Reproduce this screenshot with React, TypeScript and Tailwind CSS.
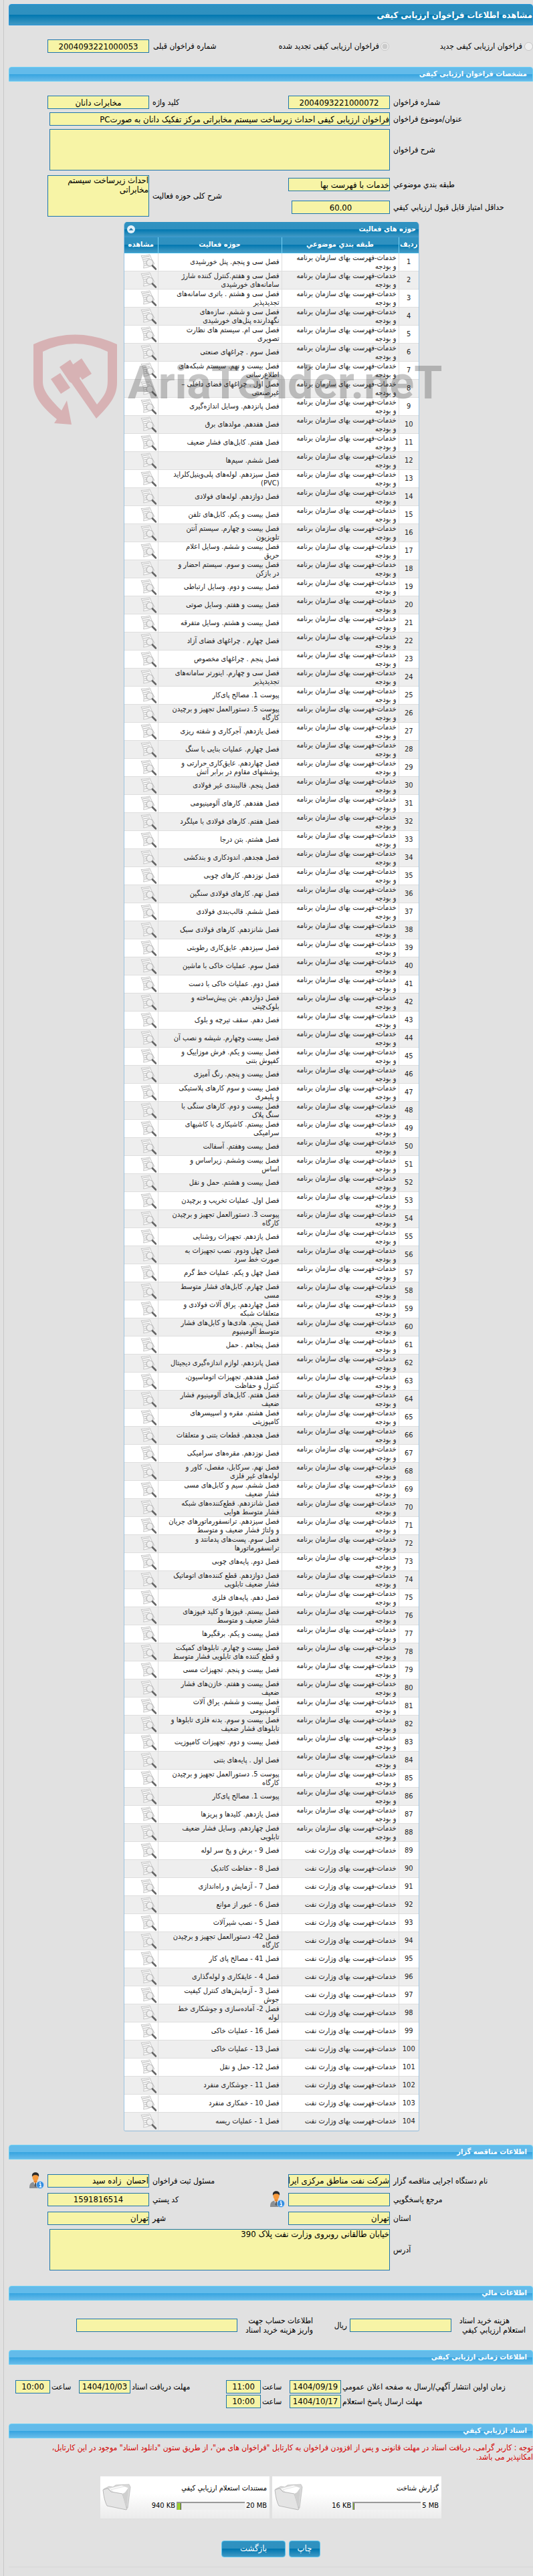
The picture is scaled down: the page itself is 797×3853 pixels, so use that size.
import React, { useState } from 'react';

const BUDGET = 'خدمات-فهرست بهای سازمان برنامه\nو بودجه';
const OIL = 'خدمات-فهرست بهای وزارت نفت';

// the first 88 rows belong to the planning organisation, the rest to the oil ministry
const budgetRows = [
    'فصل سی و پنجم. پنل خورشیدی',
    'فصل سی و هفتم.کنترل کننده شارژ\nسامانه‌های خورشیدی',
    'فصل سی و هشتم . باتری سامانه‌های\nتجدیدپذیر',
    'فصل سی و ششم. سازه‌های\nنگهدارنده پنل‌های خورشیدی',
    'فصل سی ام. سیستم های نظارت\nتصویری',
    'فصل سوم . چراغهای صنعتی',
    'فصل بیست و نهم. سیستم شبکه‌های\nاطلاع‌رسانی',
    'فصل اول . چراغهای فضای داخلی –\nغیرصنعتی',
    'فصل پانزدهم. وسایل اندازه‌گیری',
    'فصل هفدهم. مولدهای برق',
    'فصل هفتم. کابل‌های فشار ضعیف',
    'فصل ششم. سیم‌ها',
    'فصل سیزدهم. لوله‌های پلی‌وینیل‌کلراید\n(PVC)',
    'فصل دوازدهم. لوله‌های فولادی',
    'فصل بیست و یکم. کابل‌های تلفن',
    'فصل بیست و چهارم. سیستم آنتن\nتلویزیون',
    'فصل بیست و ششم. وسایل اعلام\nحریق',
    'فصل بیست و سوم. سیستم احضار و\nدر بازکن',
    'فصل بیست و دوم. وسایل ارتباطی',
    'فصل بیست و هفتم. وسایل صوتی',
    'فصل بیست و هشتم. وسایل متفرقه',
    'فصل چهارم . چراغهای فضای آزاد',
    'فصل پنجم . چراغهای مخصوص',
    'فصل سی و چهارم. اینورتر سامانه‌های\nتجدیدپذیر',
    'پیوست 1. مصالح پای‌کار',
    'پیوست 5. دستورالعمل تجهیز و برچیدن\nکارگاه',
    'فصل یازدهم. آجرکاری و شفته ریزی',
    'فصل چهارم. عملیات بنایی با سنگ',
    'فصل چهاردهم. عایق‌کاری حرارتی و\nپوششهای مقاوم در برابر آتش',
    'فصل پنجم. قالببندی غیر فولادی',
    'فصل هفدهم. کارهای آلومینیومی',
    'فصل هفتم. کارهای فولادی با میلگرد',
    'فصل هشتم. بتن درجا',
    'فصل هجدهم. اندودکاری و بندکشی',
    'فصل نوزدهم. کارهای چوبی',
    'فصل نهم. کارهای فولادی سنگین',
    'فصل ششم. قالب‌بندی فولادی',
    'فصل شانزدهم. کارهای فولادی سبک',
    'فصل سیزدهم. عایق‌کاری رطوبتی',
    'فصل سوم. عملیات خاکی با ماشین',
    'فصل دوم. عملیات خاکی با دست',
    'فصل دوازدهم. بتن پیش‌ساخته و\nبلوک‌چینی',
    'فصل دهم. سقف تیرچه و بلوک',
    'فصل بیست وچهارم. شیشه و نصب آن',
    'فصل بیست و یکم. فرش موزاییک و\nکفپوش بتنی',
    'فصل بیست و پنجم. رنگ آمیزی',
    'فصل بیست و سوم کارهای پلاستیکی\nو پلیمری',
    'فصل بیست و دوم. کارهای سنگی با\nسنگ پلاک',
    'فصل بیستم. کاشیکاری با کاشیهای\nسرامیکی',
    'فصل بیست وهفتم. آسفالت',
    'فصل بیست وششم. زیراساس و\nاساس',
    'فصل بیست و هشتم. حمل و نقل',
    'فصل اول. عملیات تخریب و برچیدن',
    'پیوست 3. دستورالعمل تجهیز و برچیدن\nکارگاه',
    'فصل یازدهم. تجهیزات روشنایی',
    'فصل چهل ودوم. نصب تجهیزات به\nصورت خط سرد',
    'فصل چهل و یکم. عملیات خط گرم',
    'فصل چهارم. کابل‌های فشار متوسط\nمسی',
    'فصل چهاردهم. یراق آلات فولادی و\nمتعلقات شبکه',
    'فصل پنجم. هادی‌ها و کابل‌های فشار\nمتوسط آلومینیوم',
    'فصل پنجاهم . حمل',
    'فصل پانزدهم. لوازم اندازه‌گیری دیجیتال',
    'فصل هفدهم. تجهیزات اتوماسیون،\nکنترل و حفاظت',
    'فصل هفتم. کابل‌های آلومینیوم فشار\nضعیف',
    'فصل هشتم. مقره و اسپیسرهای\nکامپوزیتی',
    'فصل هجدهم. قطعات بتنی و متعلقات',
    'فصل نوزدهم. مقره‌های سرامیکی',
    'فصل نهم. سرکابل، مفصل، کاور و\nلوله‌های غیر فلزی',
    'فصل ششم. سیم و کابل‌های مسی\nفشار ضعیف',
    'فصل شانزدهم. قطع‌کننده‌های شبکه\nفشار متوسط هوایی',
    'فصل سیزدهم. ترانسفورماتورهای جریان\nو ولتاژ فشار ضعیف و متوسط',
    'فصل سوم. پست‌های پدمانتد و\nترانسفورماتورها',
    'فصل دوم. پایه‌های چوبی',
    'فصل دوازدهم. قطع کننده‌های اتوماتیک\nفشار ضعیف تابلویی',
    'فصل دهم. پایه‌های فلزی',
    'فصل بیستم. فیوزها و کلید فیوزهای\nفشار ضعیف و متوسط',
    'فصل بیست و یکم. برقگیرها',
    'فصل بیست و چهارم. تابلوهای کمپکت\nو قطع کننده های تابلویی فشار متوسط',
    'فصل بیست و پنجم. تجهیزات مسی',
    'فصل بیست و هفتم. خازن‌های فشار\nضعیف',
    'فصل بیست و ششم. یراق آلات\nآلومینیومی',
    'فصل بیست و سوم. بدنه فلزی تابلوها و\nتابلوهای فشار ضعیف',
    'فصل بیست و دوم. تجهیزات کامپوزیت',
    'فصل اول . پایه‌های بتنی',
    'پیوست 5. دستورالعمل تجهیز و برچیدن\nکارگاه',
    'پیوست 1. مصالح پای‌کار',
    'فصل یازدهم. کلیدها و پریزها',
    'فصل چهاردهم. وسایل فشار ضعیف\nتابلویی',
];

const oilRows = [
    'فصل 9 - برش و پخ سر لوله',
    'فصل 8 - حفاظت کاتدیک',
    'فصل 7 - آزمایش و راه‌اندازی',
    'فصل 6 - عبور از موانع',
    'فصل 5 - نصب شیرآلات',
    'فصل 42- دستورالعمل تجهیز و برچیدن\nکارگاه',
    'فصل 41 - مصالح پای کار',
    'فصل 4 - عایقکاری و لوله‌گذاری',
    'فصل 3 - آزمایش‌های کنترل کیفیت\nجوش',
    'فصل 2- آماده‌سازی و جوشکاری خط\nلوله',
    'فصل 16 - عملیات خاکی',
    'فصل 13 - عملیات خاکی',
    'فصل 12- حمل و نقل',
    'فصل 11 - جوشکاری منفرد',
    'فصل 10 - خمکاری منفرد',
    'فصل 1 - عملیات ریسه',
];

const rows = [
    ...budgetRows.map(name => ({ category: BUDGET, name })),
    ...oilRows.map(name => ({ category: OIL, name })),
];

const FIELD = 'block border border-[#1f76ab] bg-[#f7f4a6] text-[13px] text-black outline-none';
const DARK = 'bg-[linear-gradient(#2f92c1_0%,#2f90bf_50%,#0077b0_50%,#4199c4_100%)]';

const ViewIcon: React.FC = () => (
    <svg width="24" height="24" viewBox="0 0 24 24" fill="none">
        <path d="M1 2.5C5 2.5 10 2 14 .8c1.500 4 3.500 9 7 13.700-3.500 3-8.500 5.500-16.500 6.500 1.500-5 0-12-3.500-18.500z" fill="#f8f8f8" stroke="#c2c2c2" strokeWidth=".9" />
        <path d="M3 5l10.500-1.800M4 8l10-1.800M5 11l4-.7M5.500 14l4-.5M5.500 17l4.500-.5" stroke="#bdbdbd" strokeWidth="1" />
        <circle cx="14" cy="13" r="5" fill="#ededed" fillOpacity=".85" stroke="#b5b5b5" strokeWidth="1.100" />
        <path d="M11.500 12.500c.3-1.500 1.500-2.300 3-2.300" stroke="#fff" />
        <path d="M18 17.500l5 5" stroke="#666" strokeWidth="2.600" strokeLinecap="round" />
    </svg>
);

const PersonIcon: React.FC = () => (
    <svg width="23" height="25" viewBox="0 0 23 25">
        <path d="M1 24c0-5 1-8 5-9l3.500-1.500L14 15c4 1 5 4 5 9z" fill="#8b8f94" />
        <path d="M7 14l2.800 7.500L13 14z" fill="#f3f3f3" />
        <path d="M9.300 15.500h1.500l.8 5-1.500 2-1.500-2z" fill="#55585c" />
        <path d="M7.500 10h5v4.500l-2.500 2-2.500-2z" fill="#e8862c" />
        <ellipse cx="10" cy="7.500" rx="4.500" ry="5.500" fill="#f79a3c" />
        <path d="M5 7C4.300 2.500 6.500.3 10 .3s6 2.200 5 6.700C14 4.800 12 4.300 10 4.300S6 4.800 5 7z" fill="#2b2b2b" />
        <circle cx="17" cy="19" r="5.500" fill="#2f8be0" stroke="#bfe0fa" strokeWidth=".7" />
        <path d="M15.800 18h2v4M15.500 22h3.600" stroke="#fff" strokeWidth="1.300" fill="none" />
        <circle cx="17" cy="15.800" r="1" fill="#fff" />
    </svg>
);

const FolderIcon: React.FC = () => (
    <svg width="44" height="40" viewBox="0 0 44 40">
        <path d="M2 8l8-4 6 1 4-3 20-1 2 4-4 31-5 2z" fill="#d9d9d9" stroke="#bdbdbd" strokeWidth=".8" />
        <path d="M9 7l20-5 9 3-2 28z" fill="#fafafa" stroke="#d0d0d0" strokeWidth=".7" />
        <path d="M13 9l20-5 6 2-3 27z" fill="#fff" stroke="#d8d8d8" strokeWidth=".7" />
        <path d="M1 9l7-2 5 5 17 3 7 22-1 2L7 33C3 25 2 17 1 9z" fill="#e4e4e4" stroke="#b2b2b2" strokeWidth=".9" />
        <path d="M30 15l4-2 5-7-3 33z" fill="#cfcfcf" />
    </svg>
);

const SectionBar: React.FC<{ title: string }> = ({ title }) => (
    <h2 className="h-[22px] rounded-t-[4px] border border-[#6cd0f5] bg-[linear-gradient(#63bbea_0%,#63bbea_50%,#35a4e0_50%,#68bbe9_100%)] px-2 text-[11px] font-bold leading-5 text-white">
        {title}
    </h2>
);

const Field: React.FC<{ id: string; value?: string; center?: boolean; className?: string }> = ({ id, value = '', center, className = 'w-[152px]' }) => (
    <input id={id} type="text" readOnly value={value} className={`${FIELD} h-5 shrink-0 ${center ? 'text-center' : 'text-right'} ${className}`} />
);

const Area: React.FC<{ id: string; value?: string; className?: string }> = ({ id, value = '', className = '' }) => (
    <textarea id={id} readOnly value={value} className={`${FIELD} h-[62px] resize-none overflow-hidden leading-[14px] ${className}`} />
);

// right-hand label column
const Label: React.FC<{ htmlFor: string; children: React.ReactNode }> = ({ htmlFor, children }) => (
    <label htmlFor={htmlFor} className="w-[209px] shrink-0 whitespace-nowrap text-left">{children}</label>
);

const SideLabel: React.FC<{ htmlFor: string; children: React.ReactNode }> = ({ htmlFor, children }) => (
    <label htmlFor={htmlFor} className="min-w-0 flex-1 whitespace-nowrap text-left">{children}</label>
);

const ActivityTable: React.FC = () => {
    const [open, setOpen] = useState(true);

    return (
        <section className="mr-[170px] w-[442px] overflow-hidden rounded-t-[5px] rounded-b-[3px] border border-t-0 border-[#9cc4e2] bg-[#e2e2e2] text-[11px]">
            <div className={`flex h-[23px] items-center justify-between border-b border-[#3a9ad2] px-1 text-white ${DARK}`}>
                <h3 className="font-bold">حوزه های فعالیت</h3>
                <button type="button" aria-label="بستن" onClick={() => setOpen(!open)} className="flex size-3 items-center justify-center rounded-full bg-[#e3f1fa]">
                    <svg width="8" height="6" viewBox="0 0 8 6"><path d="M4 1l3.500 3.500h-7z" fill="#2277a8" /></svg>
                </button>
            </div>
            {open && (
                <table className="w-full table-fixed">
                    <thead>
                        <tr className={`h-[23px] border-b border-[#62caf2] text-white ${DARK}`}>
                            <th scope="col" className="w-[30px] border-l border-[#72d0f4] p-0">ردیف</th>
                            <th scope="col" className="w-[175px] border-l border-[#72d0f4] p-0">طبقه بندي موضوعي</th>
                            <th scope="col" className="border-l border-[#72d0f4] p-0">حوزه فعالیت</th>
                            <th scope="col" className="w-[50px] p-0">مشاهده</th>
                        </tr>
                    </thead>
                    <tbody className="leading-[13px] text-[#222]">
                        {rows.map((row, i) => (
                            <tr key={i} className="h-[27px] border-b border-[#dedede] bg-white even:bg-[#eeeeee]">
                                <td className="border-l border-[#dedede] p-0 text-center">{i + 1}</td>
                                <td className="whitespace-pre border-l border-[#dedede] py-0 pl-0 pr-[3px]">{row.category}</td>
                                <td className="whitespace-pre border-l border-[#dedede] py-0 pl-0 pr-[3px]">{row.name}</td>
                                <td className="py-0 pl-0 pr-[2px]">
                                    <button type="button" aria-label="مشاهده" className="block"><ViewIcon /></button>
                                </td>
                            </tr>
                        ))}
                    </tbody>
                </table>
            )}
        </section>
    );
};

const FileCard: React.FC<{ title: string; used: string; total: string; percent: number }> = ({ title, used, total, percent }) => (
    <a href="#" className="flex h-[63px] w-[253px] justify-between bg-[linear-gradient(#ffffff_40%,#ebebeb)] pl-[3px] pr-1 text-[11px] text-black">
        <div className="pt-[11px]">
            <div className="whitespace-nowrap leading-[14px]">{title}</div>
            <div className="mt-3 flex items-center gap-[2px] leading-[14px]">
                <span dir="ltr">{total}</span>
                <span className="flex h-3 w-[102px] justify-end border-l border-t-2 border-[#999] bg-[#eeeeee]">
                    <span className="border-r border-[#445] bg-[#9acd32]" style={{ width: `${percent}%` }} />
                </span>
                <span dir="ltr">{used}</span>
            </div>
        </div>
        <div className="flex items-center"><FolderIcon /></div>
    </a>
);

const Watermark: React.FC = () => (
    <div dir="ltr" aria-hidden="true" className="pointer-events-none absolute left-[50px] top-[498px] flex items-start opacity-30">
        <svg width="125" height="140" viewBox="0 0 125 140" fill="#c2474f">
            <path d="M0 17Q62-12 125 17v57c0 20-10 33-31 54L57 75l-3-2-15-22 16-11 15 25-1 3 26 39c12-14 16-21 16-36V28Q62 4 14 28v45c0 14 12 27 28 43l8-15 7 36-26-2 4-6C12 110 0 95 0 74z" />
            <path d="M26 69l14-9 15 22-14 9zM58 48l14-10 15 23-14 9z" />
        </svg>
        <span className="ml-4 mt-[34px] font-['Liberation_Sans_Narrow',Roboto,sans-serif] text-[68px] font-bold leading-[82px] text-[#444]">AriaTender.neT</span>
    </div>
);

const ACTION = 'h-[25px] rounded-[4px] border border-[#58c4f0] text-[13px] leading-[22px] text-white';

const App: React.FC = () => {
    return (
        <main dir="rtl" className="relative overflow-hidden bg-[#e1e1e1] pl-[5px] font-['DejaVu_Sans_Condensed','DejaVu_Sans',sans-serif] text-[12px] leading-[14px] text-black">
            <div className="border-l border-[#c8c8c8] pl-[7px] pt-[6px]">
                <h1 className={`h-8 rounded-t-[4px] border border-[#2795da] text-[13px] font-bold leading-[32px] text-white ${DARK}`}>
                    مشاهده اطلاعات فراخوان ارزیابی کیفی
                </h1>

                <div className="mt-[21px] flex h-5 items-center">
                    <label className="flex w-[215px] items-center gap-[3px] whitespace-nowrap">
                        <input type="radio" name="kind" disabled className="m-0 size-[13px]" />
                        فراخوان ارزیابی کیفی جدید
                    </label>
                    <label className="flex flex-1 items-center gap-[2px] whitespace-nowrap">
                        <input type="radio" name="kind" disabled defaultChecked className="m-0 size-[13px]" />
                        فراخوان ارزیابی کیفی تجدید شده
                    </label>
                    <label htmlFor="prev" className="ml-[6px] whitespace-nowrap">شماره فراخوان قبلی</label>
                    <Field id="prev" value="2004093221000053" center className="ml-[58px] w-[152px]" />
                </div>

                <div className="mt-[21px]"><SectionBar title="مشخصات فراخوان ارزیابی کیفی" /></div>
                <div className="mt-[21px] flex flex-col gap-[5px]">
                    <div className="flex items-center gap-[5px] pl-[58px]">
                        <Label htmlFor="no">شماره فراخوان</Label>
                        <Field id="no" value="2004093221000072" center />
                        <SideLabel htmlFor="keyword">کلید واژه</SideLabel>
                        <Field id="keyword" value="مخابرات دانان" center />
                    </div>
                    <div className="flex items-center gap-[5px] pl-[61px]">
                        <Label htmlFor="title">عنوان/موضوع فراخوان</Label>
                        <Field id="title" value="فراخوان ارزیابی کیفی احداث زیرساخت سیستم مخابراتی مرکز تفکیک دانان به صورتPC" className="min-w-0 flex-1" />
                    </div>
                    <div className="flex items-center gap-[5px] pl-[61px]">
                        <Label htmlFor="desc">شرح فراخوان</Label>
                        <Area id="desc" className="min-w-0 flex-1" />
                    </div>
                </div>
                <div className="mt-[7px] flex items-center gap-[5px] pl-[58px]">
                    <div className="flex flex-col gap-[14px]">
                        <div className="flex items-center gap-[5px]">
                            <Label htmlFor="category">طبقه بندي موضوعي</Label>
                            <Field id="category" value="خدمات با فهرست بها" />
                        </div>
                        <div className="flex items-center gap-[5px]">
                            <Label htmlFor="score">حداقل امتیاز قابل قبول ارزیابي کیفي</Label>
                            <Field id="score" value="60.00" center className="w-[147px]" />
                        </div>
                    </div>
                    <SideLabel htmlFor="scope">شرح کلی حوزه فعالیت</SideLabel>
                    <Area id="scope" value={'احداث زیرساخت سیستم\nمخابراتی'} className="w-[152px]" />
                </div>

                <div className="mt-2"><ActivityTable /></div>

                <div className="mt-5"><SectionBar title="اطلاعات مناقصه گزار" /></div>
                <div className="mt-[22px] flex flex-col gap-2">
                    <div className="flex h-5 items-center gap-[5px] pl-[30px]">
                        <Label htmlFor="org">نام دستگاه اجرایی مناقصه گزار</Label>
                        <Field id="org" value="شرکت نفت مناطق مرکزی ایران" />
                        <SideLabel htmlFor="owner">مسئول ثبت فراخوان</SideLabel>
                        <Field id="owner" value="احسان  زاده سید" />
                        <button type="button" aria-label="مسئول ثبت فراخوان"><PersonIcon /></button>
                    </div>
                    <div className="flex h-5 items-center gap-[5px] pl-[58px]">
                        <Label htmlFor="contact">مرجع پاسخگویي</Label>
                        <Field id="contact" />
                        <button type="button" aria-label="مرجع پاسخگویي"><PersonIcon /></button>
                        <SideLabel htmlFor="zip">کد پستي</SideLabel>
                        <Field id="zip" value="1591816514" center />
                    </div>
                    <div className="flex items-center gap-[5px] pl-[58px]">
                        <Label htmlFor="province">استان</Label>
                        <Field id="province" value="تهران" />
                        <SideLabel htmlFor="city">شهر</SideLabel>
                        <Field id="city" value="تهران" />
                    </div>
                </div>
                <div className="mt-[6px] flex items-center gap-[5px] pl-[61px]">
                    <Label htmlFor="address">آدرس</Label>
                    <Area id="address" value="خیابان طالقانی روبروی وزارت نفت پلاک 390" className="min-w-0 flex-1" />
                </div>

                <div className="mt-[23px]"><SectionBar title="اطلاعات مالي" /></div>
                <div className="mt-[23px] flex items-center pl-[101px]">
                    <label htmlFor="fee" className="w-[120px] whitespace-nowrap pr-[11px]">
                        <span className="block px-6">هزینه خرید اسناد</span>
                        استعلام ارزیابي کیفي
                    </label>
                    <Field id="fee" className="mr-[2px] w-[152px]" />
                    <span className="mr-1">ریال</span>
                    <label htmlFor="account" className="flex-1 whitespace-nowrap pl-[3px]">
                        <span className="mr-auto block w-[110px]">اطلاعات حساب جهت<br />واریز هزینه خرید اسناد</span>
                    </label>
                    <Field id="account" className="w-[241px]" />
                </div>

                <div className="mt-[23px]"><SectionBar title="اطلاعات زمانی ارزیابی کیفی" /></div>
                <div className="mt-[23px] flex flex-col gap-[2px]">
                    <div className="flex items-center gap-[2px] pl-[10px]">
                        <label htmlFor="pub-date" className="w-[285px] whitespace-nowrap text-left">زمان اولین انتشار آگهي/ارسال به صفحه اعلان عمومي</label>
                        <Field id="pub-date" value="1404/09/19" center className="w-[77px]" />
                        <label htmlFor="pub-time" className="w-[39px] text-left">ساعت</label>
                        <Field id="pub-time" value="11:00" center className="w-[52px]" />
                        <label htmlFor="doc-date" className="flex-1 whitespace-nowrap text-left">مهلت دریافت اسناد</label>
                        <Field id="doc-date" value="1404/10/03" center className="w-[77px]" />
                        <label htmlFor="doc-time" className="w-[39px] text-left">ساعت</label>
                        <Field id="doc-time" value="10:00" center className="w-[52px]" />
                    </div>
                    <div className="flex items-center gap-[2px]">
                        <label htmlFor="reply-date" className="w-[285px] text-left">مهلت ارسال پاسخ استعلام</label>
                        <Field id="reply-date" value="1404/10/17" center className="w-[77px]" />
                        <label htmlFor="reply-time" className="w-[39px] text-left">ساعت</label>
                        <Field id="reply-time" value="10:00" center className="w-[52px]" />
                    </div>
                </div>

                <div className="mt-[23px]"><SectionBar title="اسناد ارزیابي کیفي" /></div>
                <p className="mt-[7px] text-[12px] leading-[14px] text-[#d40000]">
                    توجه : کاربر گرامی، دریافت اسناد در مهلت قانونی و پس از افزودن فراخوان به کارتابل "فراخوان های من"، از طریق ستون "دانلود اسناد" موجود در این کارتابل،
                    <br />
                    امکانپذیر می باشد.
                </p>

                <div className="mt-[22px] flex justify-center gap-1">
                    <FileCard title="گزارش شناخت" total="5 MB" used="16 KB" percent={2} />
                    <FileCard title="مستندات استعلام ارزیابي کیفي" total="20 MB" used="940 KB" percent={6} />
                </div>

                <div className="mt-[33px] flex justify-center gap-[5px]">
                    <button type="button" className={`w-[47px] ${ACTION} ${DARK}`}>چاپ</button>
                    <button type="button" className={`w-[96px] ${ACTION} ${DARK}`}>بازگشت</button>
                </div>
                <div className="mt-[14px] h-[14px] border-t border-[#d6d6d6]" />
            </div>
            <Watermark />
        </main>
    );
};

export default App;
